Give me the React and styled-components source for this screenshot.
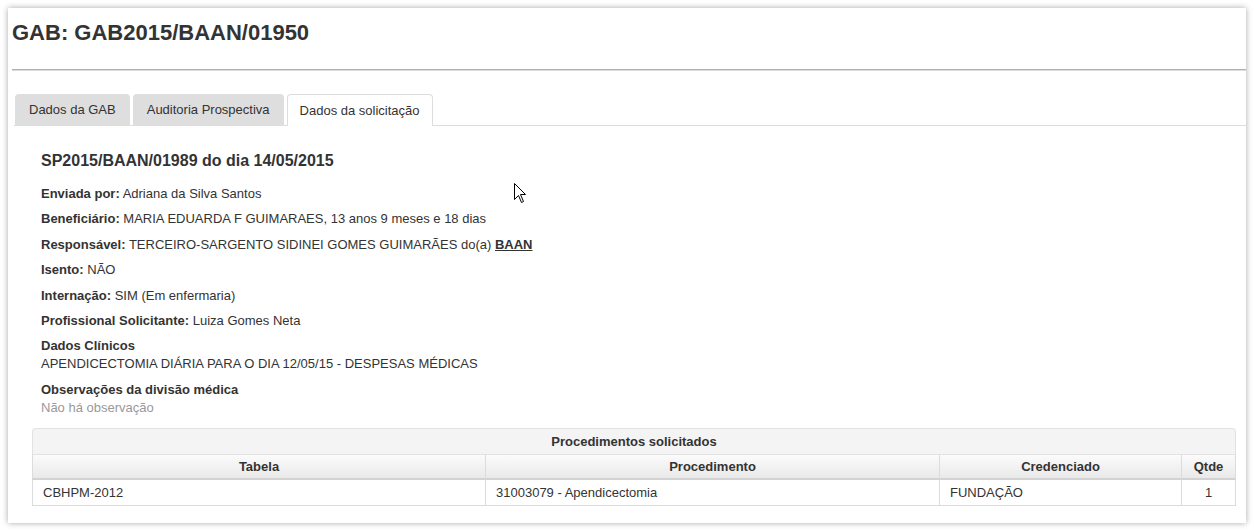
import React from "react";
import styled, { createGlobalStyle } from "styled-components";

const GlobalStyle = createGlobalStyle`
  html, body {
    margin: 0;
    padding: 0;
    background: #fff;
  }
  body {
    font-family: "Liberation Sans", Arial, sans-serif;
    font-size: 13px;
    color: #333;
  }
`;

const Page = styled.div`
  padding: 8px;
`;

const Panel = styled.div`
  position: relative;
  width: 1238px;
  height: 515px;
  background: #fff;
  box-shadow: 0 0 6px rgba(0, 0, 0, 0.35);
  box-sizing: border-box;
`;

const Title = styled.h1`
  margin: 0;
  padding: 12px 0 0 4px;
  font-size: 22px;
  line-height: 26px;
  font-weight: bold;
  color: #333;
`;

const Rule = styled.div`
  margin: 23px 0 0 4px;
  height: 0;
  border-top: 1px solid #b0b0b0;
  border-bottom: 1px solid #dcdcdc;
`;

const TabBar = styled.div`
  display: flex;
  gap: 3px;
  margin: 23px 0 0 6px;
  padding-left: 1px;
  border-bottom: 1px solid #ddd;
  height: 32px;
  box-sizing: border-box;
`;

const Tab = styled.div`
  height: ${(p) => (p.$active ? "32px" : "31px")};
  padding: 0 ${(p) => (p.$active ? "12px" : "14px")};
  box-sizing: border-box;
  display: flex;
  align-items: center;
  font-size: 13px;
  color: #333;
  border-radius: 4px 4px 0 0;
  background: ${(p) => (p.$active ? "#fff" : "#dedede")};
  border: ${(p) => (p.$active ? "1px solid #ddd" : "none")};
  border-bottom: none;
  margin-bottom: ${(p) => (p.$active ? "-1px" : "0")};
  white-space: nowrap;
`;

const TabContent = styled.div`
  padding: 25px 10px 0 24px;
`;

const Info = styled.div`
  padding-left: 9px;
`;

const Heading = styled.h2`
  margin: 0 0 14px;
  font-size: 16px;
  line-height: 20px;
  font-weight: bold;
  color: #333;
`;

const Field = styled.div`
  line-height: 18px;
  margin-bottom: 7.4px;
  color: #333;
`;

const Label = styled.b`
  font-weight: bold;
`;

const Muted = styled.div`
  color: #999;
`;

const UnitLink = styled.a`
  font-weight: bold;
  color: #333;
  text-decoration: underline;
`;

const Table = styled.table`
  width: 100%;
  border-collapse: separate;
  border-spacing: 0;
  table-layout: fixed;
  margin-top: 11px;
  font-size: 13px;
  color: #333;
`;

const CaptionCell = styled.th`
  height: 26px;
  padding: 0;
  box-sizing: border-box;
  background: #f4f4f4;
  border: 1px solid #e2e2e2;
  border-bottom: none;
  border-radius: 4px 4px 0 0;
  font-weight: bold;
  text-align: center;
`;

const HeadCell = styled.th`
  height: 26px;
  padding: 0;
  box-sizing: border-box;
  background: linear-gradient(to bottom, #fbfbfb, #e9e9e9);
  border-top: 1px solid #e2e2e2;
  border-bottom: 2px solid #d2d2d2;
  border-left: 1px solid #dcdcdc;
  &:last-child {
    border-right: 1px solid #dcdcdc;
  }
  font-weight: bold;
  text-align: center;
`;

const Cell = styled.td`
  height: 26px;
  padding: 0 10px;
  box-sizing: border-box;
  border-bottom: 1px solid #dcdcdc;
  border-left: 1px solid #dcdcdc;
  &:last-child {
    border-right: 1px solid #dcdcdc;
  }
  text-align: ${(p) => (p.$center ? "center" : "left")};
  white-space: nowrap;
`;

const Cursor = styled.svg`
  position: absolute;
  left: 506px;
  top: 175px;
`;

const columns = [
  { name: "Tabela", width: 453 },
  { name: "Procedimento", width: 454 },
  { name: "Credenciado", width: 242 },
  { name: "Qtde", width: 55 },
];

export default function App() {
  return (
    <>
      <GlobalStyle />
      <Page>
        <Panel>
          <Title>GAB: GAB2015/BAAN/01950</Title>
          <Rule />
          <TabBar>
            <Tab>Dados da GAB</Tab>
            <Tab>Auditoria Prospectiva</Tab>
            <Tab $active>Dados da solicitação</Tab>
          </TabBar>
          <TabContent>
            <Info>
              <Heading>SP2015/BAAN/01989 do dia 14/05/2015</Heading>
              <Field>
                <Label>Enviada por:</Label> Adriana da Silva Santos
              </Field>
              <Field>
                <Label>Beneficiário:</Label> MARIA EDUARDA F GUIMARAES, 13 anos 9 meses e 18 dias
              </Field>
              <Field>
                <Label>Responsável:</Label> TERCEIRO-SARGENTO SIDINEI GOMES GUIMARÃES do(a){" "}
                <UnitLink>BAAN</UnitLink>
              </Field>
              <Field>
                <Label>Isento:</Label> NÃO
              </Field>
              <Field>
                <Label>Internação:</Label> SIM (Em enfermaria)
              </Field>
              <Field>
                <Label>Profissional Solicitante:</Label> Luiza Gomes Neta
              </Field>
              <Field>
                <Label>Dados Clínicos</Label>
                <div>APENDICECTOMIA DIÁRIA PARA O DIA 12/05/15 - DESPESAS MÉDICAS</div>
              </Field>
              <Field>
                <Label>Observações da divisão médica</Label>
                <Muted>Não há observação</Muted>
              </Field>
            </Info>
            <Table>
              <colgroup>
                {columns.map((c) => (
                  <col key={c.name} style={{ width: c.width }} />
                ))}
              </colgroup>
              <thead>
                <tr>
                  <CaptionCell colSpan={4}>Procedimentos solicitados</CaptionCell>
                </tr>
                <tr>
                  {columns.map((c) => (
                    <HeadCell key={c.name}>{c.name}</HeadCell>
                  ))}
                </tr>
              </thead>
              <tbody>
                <tr>
                  <Cell>CBHPM-2012</Cell>
                  <Cell>31003079 - Apendicectomia</Cell>
                  <Cell>FUNDAÇÃO</Cell>
                  <Cell $center>1</Cell>
                </tr>
              </tbody>
            </Table>
          </TabContent>
          <Cursor width="13" height="21" viewBox="0 0 13 21">
            <path
              d="M0.5 0.5 L0.5 16.5 L4.5 12.5 L7.5 19.5 L9.5 18.5 L6.5 11.5 L11.5 11.5 Z"
              fill="#fff"
              stroke="#000"
              strokeWidth="1"
              strokeLinejoin="miter"
            />
          </Cursor>
        </Panel>
      </Page>
    </>
  );
}
